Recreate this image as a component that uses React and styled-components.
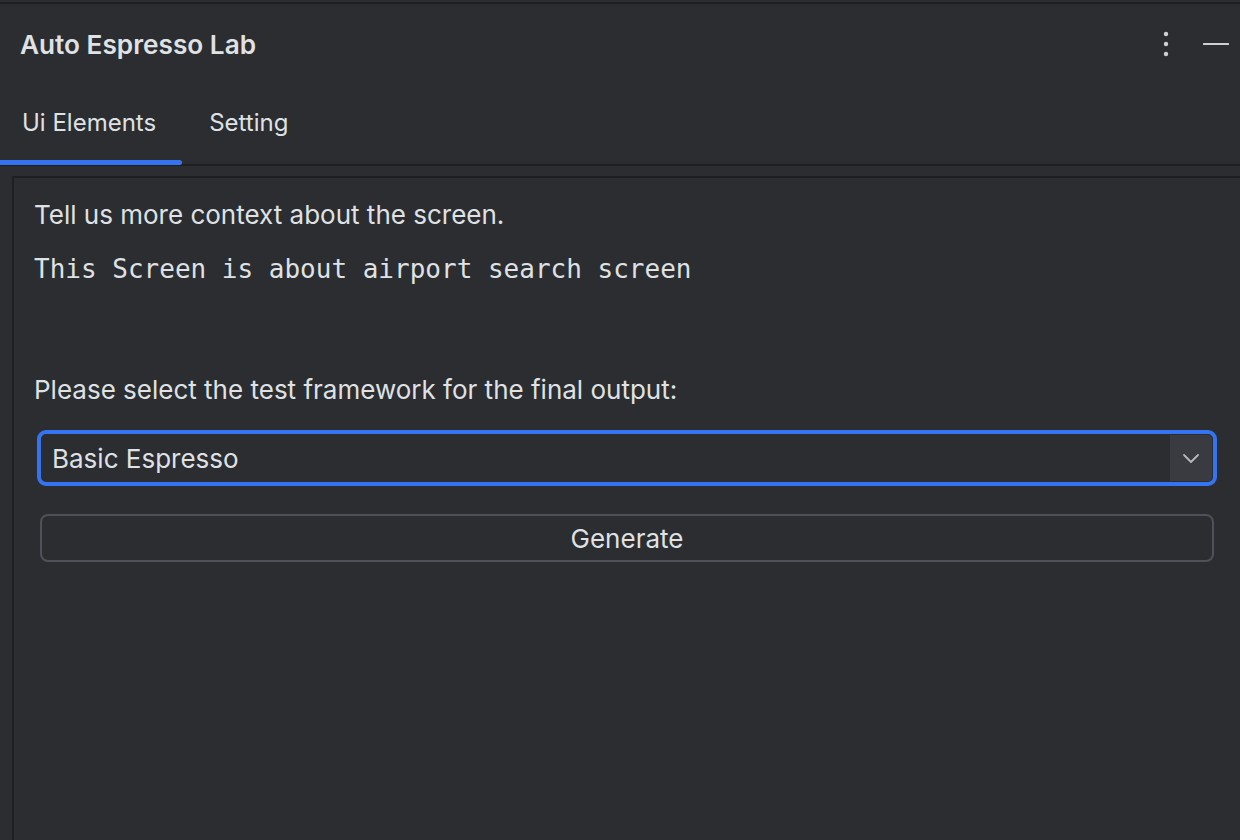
import React from "react";
import styled, { createGlobalStyle } from "styled-components";

const GlobalStyle = createGlobalStyle`
  html, body {
    margin: 0;
    padding: 0;
    background: #2b2d30;
  }
  body {
    font-family: Inter, "Noto Sans", sans-serif;
    color: #dfe1e5;
  }
`;

const Window = styled.div`
  width: 1240px;
  height: 840px;
  display: flex;
  flex-direction: column;
  background: #2b2d30;
  overflow: hidden;
`;

const TopLine = styled.div`
  margin-top: 2px;
  height: 2px;
  background: #1e1f22;
  flex-shrink: 0;
`;

const Header = styled.div`
  height: 80px;
  display: flex;
  align-items: center;
  justify-content: space-between;
  padding: 0 10px 0 20px;
  flex-shrink: 0;
`;

const Title = styled.div`
  font-size: 26.2px;
  font-weight: 600;
`;

const HeaderActions = styled.div`
  display: flex;
  align-items: center;
  gap: 22px;
`;

const IconButton = styled.div`
  display: flex;
  align-items: center;
  justify-content: center;
  width: 28px;
  height: 28px;
  color: #ced0d6;
`;

const TabBar = styled.div`
  display: flex;
  gap: 5px;
  height: 80px;
  border-bottom: 2px solid #1e1f22;
  flex-shrink: 0;
`;

const Tab = styled.div`
  position: relative;
  display: flex;
  align-items: center;
  padding: 0 26px 3px 22px;
  font-size: 24px;
  color: #dfe1e5;
  &::after {
    content: "";
    display: ${(p) => (p.$active ? "block" : "none")};
    position: absolute;
    left: 0;
    right: 0;
    bottom: -1px;
    height: 5px;
    background: #3574f0;
    border-radius: 0 3px 3px 0;
  }
`;

const Panel = styled.div`
  flex: 1;
  margin: 10px 0 0 12px;
  border-top: 2px solid #1e1f22;
  border-left: 2px solid #1e1f22;
  padding: 21px 23px 0 20px;
  display: flex;
  flex-direction: column;
`;

const Label = styled.div`
  font-size: 26px;
  line-height: 32px;
`;

const ContextText = styled.div`
  font-family: "DejaVu Sans Mono", "Liberation Mono", monospace;
  font-size: 26px;
  line-height: 34px;
  margin-top: 21px;
  height: 122px;
`;

const Combo = styled.div`
  margin: 24px 0 0 3px;
  height: 48px;
  border: 4px solid #3574f0;
  border-radius: 9px;
  display: flex;
  align-items: stretch;
  background: #2b2d30;
`;

const ComboValue = styled.div`
  flex: 1;
  display: flex;
  align-items: center;
  padding-left: 11px;
  font-size: 26px;
`;

const ComboArrow = styled.div`
  width: 42px;
  margin: 1px 1px 1px 0;
  background: #393b40;
  border-radius: 0 4px 4px 0;
  display: flex;
  align-items: center;
  justify-content: center;
`;

const GenerateButton = styled.div`
  margin: 28px 3px 0 6px;
  height: 44px;
  border: 2px solid #4e5157;
  border-radius: 8px;
  display: flex;
  align-items: center;
  justify-content: center;
  font-size: 26px;
  color: #dfe1e5;
`;

const Kebab = () => (
  <svg width="8" height="28" viewBox="0 0 8 28">
    <circle cx="4" cy="4" r="2.2" fill="currentColor" />
    <circle cx="4" cy="14" r="2.2" fill="currentColor" />
    <circle cx="4" cy="24" r="2.2" fill="currentColor" />
  </svg>
);

const Minimize = () => (
  <svg width="28" height="4" viewBox="0 0 28 4">
    <rect x="1" y="1" width="26" height="2" rx="0.5" fill="currentColor" />
  </svg>
);

const Chevron = () => (
  <svg width="18" height="11" viewBox="0 0 18 11">
    <polyline
      points="2,2 9,9 16,2"
      fill="none"
      stroke="#b4b8bf"
      strokeWidth="1.8"
      strokeLinecap="round"
      strokeLinejoin="round"
    />
  </svg>
);

const tabs = [
  { name: "Ui Elements", active: true },
  { name: "Setting", active: false },
];

export default function App() {
  return (
    <>
      <GlobalStyle />
      <Window>
        <TopLine />
        <Header>
          <Title>Auto Espresso Lab</Title>
          <HeaderActions>
            <IconButton>
              <Kebab />
            </IconButton>
            <IconButton>
              <Minimize />
            </IconButton>
          </HeaderActions>
        </Header>
        <TabBar>
          {tabs.map((tab) => (
            <Tab key={tab.name} $active={tab.active}>
              {tab.name}
            </Tab>
          ))}
        </TabBar>
        <Panel>
          <Label>Tell us more context about the screen.</Label>
          <ContextText>This Screen is about airport search screen</ContextText>
          <Label>Please select the test framework for the final output:</Label>
          <Combo>
            <ComboValue>Basic Espresso</ComboValue>
            <ComboArrow>
              <Chevron />
            </ComboArrow>
          </Combo>
          <GenerateButton>Generate</GenerateButton>
        </Panel>
      </Window>
    </>
  );
}
